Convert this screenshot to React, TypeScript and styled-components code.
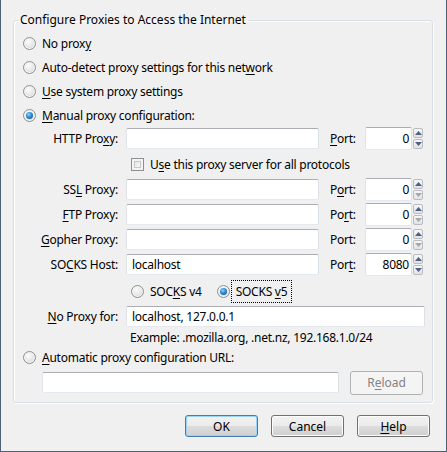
import styled, { createGlobalStyle } from "styled-components";

const GlobalStyle = createGlobalStyle`
  html, body {
    margin: 0;
    padding: 0;
    background: #f0f0f0;
  }

  body {
    font-family: "Noto Sans", "Open Sans", sans-serif;
    font-size: 12px;
    letter-spacing: -0.25px;
    color: #000;
  }

  u {
    text-decoration-thickness: 1px;
    text-underline-offset: 2px;
  }
`;

const Window = styled.div`
  box-sizing: border-box;
  width: 447px;
  height: 452px;
  padding: 12px 13px 14px 12px;
  background: #f0f0f0;
  border: 1px solid #4e6176;
  border-top: none;
  display: flex;
  flex-direction: column;
  gap: 12px;
`;

const GroupBox = styled.fieldset`
  margin: 0;
  padding: 3px 9px 6px 9px;
  min-width: 0;
  border: 1px solid #d5dfe5;
  border-radius: 3px;
  box-shadow: inset 1px 1px 0 #fff, 1px 1px 0 #fff;
`;

const Legend = styled.legend`
  margin-left: -5px;
  padding: 0 2px;
  line-height: 16px;
  letter-spacing: 0;
`;

const OptionRow = styled.label<{ $height?: number }>`
  display: flex;
  align-items: center;
  gap: 6px;
  height: ${(p) => p.$height ?? 24}px;
  white-space: nowrap;
`;

const Radio = styled.span<{ $checked?: boolean }>`
  position: relative;
  flex: none;
  box-sizing: border-box;
  width: 13px;
  height: 13px;
  border-radius: 50%;
  border: 1px solid #8f9091;
  background: radial-gradient(circle at 40% 35%, #fcfcfc 0%, #e3e3e3 60%, #cfcfcf 100%);
  box-shadow: inset 0 0 0 1px #f4f4f4;

  &::after {
    content: "";
    display: ${(p) => (p.$checked ? "block" : "none")};
    position: absolute;
    left: 2px;
    top: 2px;
    width: 7px;
    height: 7px;
    border-radius: 50%;
    background: radial-gradient(circle at 40% 35%, #8fd6ff 0%, #2a8ad4 45%, #0e4f8c 100%);
  }
`;

const CheckBox = styled.span`
  flex: none;
  box-sizing: border-box;
  width: 13px;
  height: 13px;
  border: 1px solid #8f8f8f;
  background: linear-gradient(135deg, #dcdcdc 0%, #f2f2f2 60%, #fdfdfd 100%);
  box-shadow: inset 0 0 0 2px #f4f4f4, inset 0 0 0 3px #c8c8c8;
`;

const Grid = styled.div`
  display: grid;
  grid-template-columns: 103px 193px 46px 58px;
  row-gap: 2px;
  align-items: center;
`;

const FieldLabel = styled.label`
  justify-self: end;
  padding-right: 8px;
  white-space: nowrap;
`;

const TextBox = styled.div<{ $span?: boolean }>`
  box-sizing: border-box;
  height: 21px;
  padding: 0 5px;
  display: flex;
  align-items: center;
  background: #fff;
  border: 1px solid;
  border-color: #abadb3 #dbdfe6 #e3e9ef #e2e3ea;
  border-radius: 2px;
  white-space: nowrap;
  ${(p) => (p.$span ? "grid-column: 2 / 5; margin-right: -2px;" : "")}
`;

const PortLabel = styled.label`
  padding-left: 11px;
`;

const PortField = styled.div`
  display: flex;
  align-items: center;
  gap: 1px;
`;

const PortBox = styled(TextBox)`
  flex: 1;
  justify-content: flex-end;
  padding: 0 2px 0 4px;
  height: 23px;
`;

const Spinner = styled.div`
  display: flex;
  flex-direction: column;
  gap: 1px;
`;

const SpinButton = styled.div`
  box-sizing: border-box;
  width: 10px;
  height: 10px;
  display: flex;
  align-items: center;
  justify-content: center;
  border: 1px solid #b9bcc1;
  border-radius: 2px;
  background: linear-gradient(#f7f7f7, #e2e2e2);
`;

const Wide = styled.div<{ $indent?: number; $height?: number }>`
  grid-column: 2 / 5;
  display: flex;
  align-items: center;
  gap: 6px;
  height: ${(p) => p.$height ?? 21}px;
  padding-left: ${(p) => p.$indent ?? 0}px;
  white-space: nowrap;
`;

const VersionOption = styled.label`
  display: flex;
  align-items: center;
  gap: 6px;
  margin-right: 9px;
`;

const Focus = styled.span`
  outline: 1px dotted #000;
  padding: 2px 4px;
  margin-left: -4px;
`;

const UrlRow = styled.div`
  display: flex;
  align-items: center;
  gap: 11px;
  height: 27px;
  padding-left: 19px;
`;

const UrlBox = styled(TextBox)`
  width: 298px;
`;

const ButtonBar = styled.div`
  display: flex;
  justify-content: flex-end;
  gap: 13px;
  padding-right: 3px;
`;

const Button = styled.button<{ $default?: boolean; $disabled?: boolean }>`
  box-sizing: border-box;
  width: 73px;
  height: ${(p) => (p.$disabled ? 24 : 22)}px;
  padding: 0;
  font: inherit;
  color: ${(p) => (p.$disabled ? "#838383" : "#000")};
  border: 1px solid ${(p) => (p.$default ? "#3c7fb1" : p.$disabled ? "#adb2b5" : "#707070")};
  border-radius: 3px;
  background: ${(p) =>
    p.$disabled
      ? "#f4f4f4"
      : "linear-gradient(#f2f2f2 0%, #ebebeb 49%, #dddddd 50%, #cfcfcf 100%)"};
  box-shadow: inset 0 0 0 1px
    ${(p) => (p.$default ? "#9bd4f3" : p.$disabled ? "#f4f4f4" : "#fcfcfc")};
`;

const Arrow = ({ up, enabled }: { up?: boolean; enabled?: boolean }) => (
  <svg width="7" height="4" viewBox="0 0 7 4">
    <path
      d={up ? "M0 4 L3.5 0 L7 4 Z" : "M0 0 L3.5 4 L7 0 Z"}
      fill={enabled ? "#4d6185" : "#a3a8ae"}
    />
  </svg>
);

type Proxy = {
  label: React.ReactNode;
  port: React.ReactNode;
  host?: string;
  value: string;
  canDown?: boolean;
};

const proxies: Proxy[] = [
  { label: <>HTTP Pro<u>x</u>y:</>, port: <><u>P</u>ort:</>, value: "0", canDown: true },
  { label: <>SS<u>L</u> Proxy:</>, port: <>P<u>o</u>rt:</>, value: "0" },
  { label: <><u>F</u>TP Proxy:</>, port: <>Po<u>r</u>t:</>, value: "0" },
  { label: <><u>G</u>opher Proxy:</>, port: <>Port:</>, value: "0" },
  { label: <>SO<u>C</u>KS Host:</>, port: <>Por<u>t</u>:</>, host: "localhost", value: "8080", canDown: true },
];

const ProxyRow = ({ p }: { p: Proxy }) => (
  <>
    <FieldLabel>{p.label}</FieldLabel>
    <TextBox>{p.host}</TextBox>
    <PortLabel>{p.port}</PortLabel>
    <PortField>
      <PortBox>{p.value}</PortBox>
      <Spinner>
        <SpinButton>
          <Arrow up enabled />
        </SpinButton>
        <SpinButton>
          <Arrow enabled={p.canDown} />
        </SpinButton>
      </Spinner>
    </PortField>
  </>
);

export default function App() {
  return (
    <>
      <GlobalStyle />
      <Window>
        <GroupBox>
          <Legend>Configure Proxies to Access the Internet</Legend>
          <OptionRow>
            <Radio />
            <span>No prox<u>y</u></span>
          </OptionRow>
          <OptionRow>
            <Radio />
            <span>Auto-detect proxy settings for this net<u>w</u>ork</span>
          </OptionRow>
          <OptionRow>
            <Radio />
            <span><u>U</u>se system proxy settings</span>
          </OptionRow>
          <OptionRow>
            <Radio $checked />
            <span><u>M</u>anual proxy configuration:</span>
          </OptionRow>

          <Grid>
            <ProxyRow p={proxies[0]} />
            <Wide $indent={5} $height={24}>
              <CheckBox />
              <span>U<u>s</u>e this proxy server for all protocols</span>
            </Wide>
            {proxies.slice(1).map((p, i) => (
              <ProxyRow key={i} p={p} />
            ))}
            <Wide $indent={5} $height={26}>
              <VersionOption>
                <Radio />
                <span>SOC<u>K</u>S v4</span>
              </VersionOption>
              <VersionOption>
                <Radio $checked />
                <Focus>SOCKS <u>v</u>5</Focus>
              </VersionOption>
            </Wide>
            <FieldLabel><u>N</u>o Proxy for:</FieldLabel>
            <TextBox $span>localhost, 127.0.0.1</TextBox>
            <Wide $indent={4} $height={16}>
              Example: .mozilla.org, .net.nz, 192.168.1.0/24
            </Wide>
          </Grid>

          <OptionRow $height={24}>
            <Radio />
            <span><u>A</u>utomatic proxy configuration URL:</span>
          </OptionRow>
          <UrlRow>
            <UrlBox />
            <Button $disabled>
              R<u>e</u>load
            </Button>
          </UrlRow>
        </GroupBox>

        <ButtonBar>
          <Button $default>OK</Button>
          <Button>Cancel</Button>
          <Button><u>H</u>elp</Button>
        </ButtonBar>
      </Window>
    </>
  );
}
